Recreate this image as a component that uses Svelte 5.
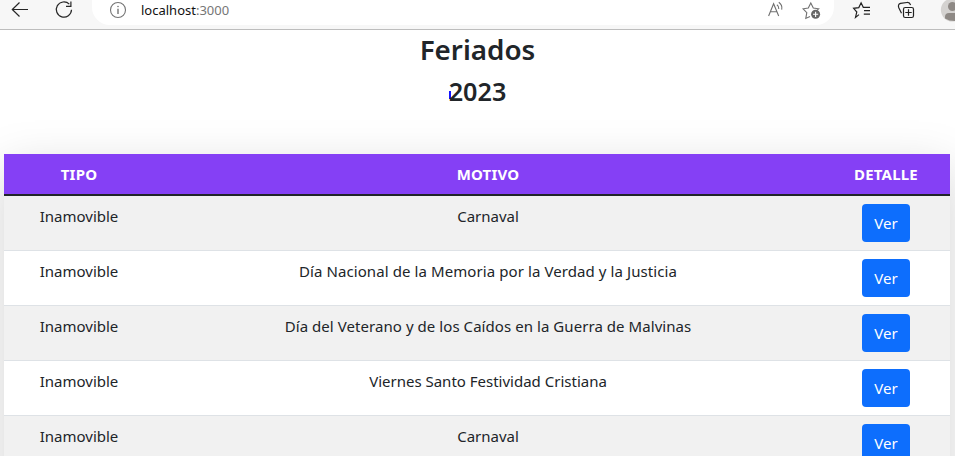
<script>
  const rows = [
    { type: 'Inamovible', reason: 'Carnaval', spacing: -0.02 },
    { type: 'Inamovible', reason: 'Día Nacional de la Memoria por la Verdad y la Justicia', spacing: 0.09 },
    { type: 'Inamovible', reason: 'Día del Veterano y de los Caídos en la Guerra de Malvinas', spacing: 0.06 },
    { type: 'Inamovible', reason: 'Viernes Santo Festividad Cristiana', spacing: 0 },
    { type: 'Inamovible', reason: 'Carnaval', spacing: -0.02 }
  ];
</script>

<div class="screen">
  <header class="toolbar">
    <svg class="nav" width="92" height="29" viewBox="0 0 92 29" fill="none" stroke="#262626" stroke-width="1.2">
      <path d="M28 9.5H12.5M19.5 2.5L12.3 9.5L19.5 16.5" />
      <path d="M69.3 4.2A7.6 7.6 0 1 0 71.5 9.8M70.9 1.5V6.4H66" />
    </svg>
    <div class="address">
      <svg width="18" height="18" viewBox="0 0 18 18" fill="none" stroke="#747474" stroke-width="1.1">
        <circle cx="9" cy="9" r="7.5" />
        <path d="M9 7.8V13" stroke-width="1.4" />
        <circle cx="9" cy="5.5" r=".8" fill="#747474" stroke="none" />
      </svg>
      <span class="url">localhost<span>:3000</span></span>
      <svg class="tools" width="66" height="28" viewBox="0 0 66 28" fill="none" stroke="#707070" stroke-width="1.1">
        <path d="M.6 16L5.6 3.8L10.7 16M2.3 11.8H9" />
        <path d="M8.9 4.7Q11 6.2 10.8 9M10.8 2.2Q14.7 5 13.7 9.7" />
        <path d="M42 16.5L37.8 18.4L38.8 12.7L35.1 8.8L40.3 8L42.8 3L45.3 8L50.7 8.8L48.5 10.7" />
        <circle cx="47.6" cy="14.3" r="4.5" fill="#666" stroke="none" />
        <path d="M47.6 11.7V16.9M45 14.3H50.2" stroke="#fff" />
      </svg>
    </div>
    <svg class="actions" width="121" height="29" viewBox="0 0 121 29" fill="none" stroke="#222" stroke-width="1.2">
      <path d="M25 14.6L21.5 17.4L22.8 12L19.6 8.3L24.8 7.6L27.1 2.8L29.3 7.3H36M30 10.6H36M29.8 14.2H36" />
      <path d="M67.5 13.3L64.9 8Q63.4 4.5 66.5 3.4L73 2.5Q75.6 2.2 76.6 5" />
      <rect x="69.5" y="7.5" width="10" height="10" rx="1.8" />
      <path d="M74.5 9.3V15.7M71.3 12.5H77.7" />
      <circle cx="118.4" cy="10" r="11.5" fill="#d4d2d0" stroke="none" />
      <circle cx="118.5" cy="6.5" r="4.5" fill="#8e8985" stroke="none" />
      <path d="M111 18.5V17Q111 13 115 13H121V21Q115 21 111 18.5Z" fill="#8e8985" stroke="none" />
    </svg>
  </header>

  <main>
    <div class="titles">
      <h1>Feriados</h1>
      <h2><i class="mark"></i>2023</h2>
    </div>
    <div class="panel">
      <table>
        <colgroup><col class="type" /><col /><col class="detail" /></colgroup>
        <thead>
          <tr><th>TIPO</th><th>MOTIVO</th><th>DETALLE</th></tr>
        </thead>
        <tbody>
          {#each rows as row}
            <tr>
              <td>{row.type}</td>
              <td style="letter-spacing: {row.spacing}px">{row.reason}</td>
              <td class="action"><button>Ver</button></td>
            </tr>
          {/each}
        </tbody>
      </table>
    </div>
  </main>
</div>

<style>
  :global(body) { margin: 0; overflow: hidden; }
  .screen {
    width: 955px;
    height: 456px;
    overflow: hidden;
    background: #fff;
    color: #212529;
    font: 15px/24px "Noto Sans", "Open Sans", sans-serif;
  }
  .toolbar {
    display: flex;
    box-sizing: border-box;
    height: 30px;
    background: #f7f7f7;
    border-bottom: 1px solid #bdbdbd;
  }
  .toolbar svg { display: block; flex: none; }
  .address {
    display: flex;
    box-sizing: border-box;
    width: 742px;
    height: 25px;
    padding-left: 17px;
    background: #fff;
    border-radius: 0 0 18px 18px;
  }
  .address > svg:first-child { margin-top: 1px; }
  .url { margin-left: 14px; font-size: 13px; line-height: 20px; color: #111; }
  .url span { color: #767676; }
  .tools { margin-left: auto; }
  .titles { height: 124px; text-align: center; }
  h1, h2 { margin: 0; font-weight: 600; }
  h1 { font-size: 27.8px; line-height: 38px; }
  h2 { margin-top: 5px; font-size: 25.2px; line-height: 36px; }
  .mark {
    display: inline-block;
    width: 2px;
    height: 8px;
    margin: 0 -2px 2px 0;
    background: #1414ff;
  }
  .panel {
    width: 946px;
    height: 600px;
    margin-left: 4px;
    box-shadow: 0 16px 48px rgba(0, 0, 0, .175);
  }
  table {
    width: 100%;
    table-layout: fixed;
    border-spacing: 0;
    background: #fff;
  }
  .type { width: 150px; }
  .detail { width: 128px; }
  th {
    box-sizing: border-box;
    height: 42px;
    padding: 7px 8px 8px;
    background: #8540f5;
    border-bottom: 2px solid #212529;
    color: #fff;
    font-size: 15px;
    letter-spacing: .2px;
    font-weight: 700;
  }
  td {
    box-sizing: border-box;
    height: 55px;
    padding: 8px;
    border-bottom: 1px solid #dee2e6;
    text-align: center;
    vertical-align: top;
    white-space: nowrap;
  }
  tbody tr:nth-child(odd) { background: #f1f1f1; }
  button {
    display: block;
    width: 48px;
    height: 38px;
    margin: 0 auto;
    padding: 0;
    border: 0;
    border-radius: 4px;
    background: #0d6efd;
    color: #fff;
    font: inherit;
  }
</style>
